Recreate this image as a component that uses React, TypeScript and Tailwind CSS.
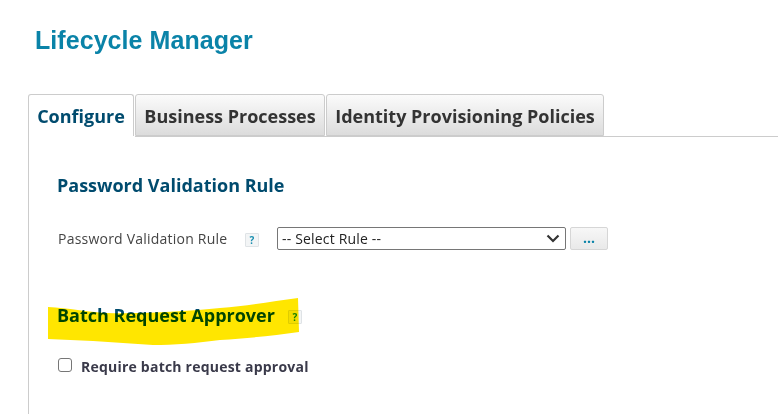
import React from "react";

function Help({ x = "" }: { x?: string }) {
  return (
    <span className={`flex h-[14px] w-[14px] items-center justify-center rounded-[1px] border border-[#dfe3e6] bg-[#f3f5f6] text-[10px] font-bold leading-none text-[#1a8fb0] ${x}`}>
      ?
    </span>
  );
}

function Tab({ label, active, w }: { label: string; active?: boolean; w: string }) {
  return (
    <div
      className={`${w} flex items-center justify-center rounded-t-[3px] border border-[#cccccc] text-[18px] font-bold ${
        active
          ? "h-[43px] border-b-0 bg-white text-[#004b6e]"
          : "h-[42px] bg-gradient-to-b from-[#fbfbfb] to-[#dcdcdc] pt-[2px] text-[#333333]"
      }`}
    >
      {label}
    </div>
  );
}

export default function App() {
  return (
    <div className="h-[414px] w-[778px] overflow-hidden bg-white font-['Open_Sans','Noto_Sans',sans-serif]">
      <h1 className="pl-[35px] pt-[25px] font-['Liberation_Sans',Arial,sans-serif] text-[25px] font-bold leading-[30px] tracking-[0.06px] text-[#0a83a8]">
        Lifecycle Manager
      </h1>
      <div className="mt-[39px] flex items-start gap-px pl-[28px]">
        <Tab label="Configure" active w="w-[106px]" />
        <Tab label="Business Processes" w="w-[190px]" />
        <Tab label="Identity Provisioning Policies" w="w-[278px]" />
      </div>
      <div className="-mt-[1px] ml-[28px] h-[278px] border-l border-t border-[#cccccc]">
        <div className="relative z-10 -mt-px ml-px h-px w-[105px] bg-white" />
        <h2 className="ml-[28px] mt-[36px] text-[18px] font-bold leading-[24px] text-[#004b6e]">
          Password Validation Rule
        </h2>
        <div className="ml-[29px] mt-[30px] flex items-center">
          <span className="w-[187px] text-[14px] leading-[20px] tracking-[0.22px] text-[#444444]">
            Password Validation Rule
          </span>
          <Help x="mt-[2px]" />
          <div className="ml-[18px] flex h-[23px] w-[289px] items-center justify-between rounded-[2px] border border-[#767676] bg-white pl-[4px] pr-[5px] text-[14px] tracking-[0.18px] text-[#222222]">
            <span>-- Select Rule --</span>
            <svg width="14" height="9" viewBox="0 0 14 9" fill="none" stroke="#333" strokeWidth="2.2">
              <path d="M1.5 1.5 7 7 12.5 1.5" />
            </svg>
          </div>
          <div className="ml-[4px] flex h-[23px] w-[38px] items-center justify-center rounded-[2px] border border-[#d6d6d6] bg-gradient-to-b from-[#f7f7f7] to-[#e9e9e9] pb-[3px] text-[14px] font-bold text-[#0a83a8]">
            ...
          </div>
        </div>
        <div className="relative ml-[28px] mt-[53px] flex h-[24px] w-fit items-center">
          <h2 className="text-[18px] font-bold leading-[24px] text-[#004b6e]">Batch Request Approver</h2>
          <Help x="ml-[13px] mt-[3px]" />
          <svg
            className="absolute -left-[9px] -top-[6px] mix-blend-multiply"
            width="252"
            height="50"
            viewBox="0 0 252 50"
            aria-hidden="true"
          >
            <path
              d="M0 10 C20 11 40 15 58 16 C100 17 140 14 172 11 C200 9 225 4 250 1 L251 35 C225 39 200 41 172 43 C150 46 125 48 105 48 C85 47 65 45 45 44 C30 43 15 43 0 42 Z"
              fill="#ffe600"
            />
          </svg>
        </div>
        <label className="ml-[29px] mt-[30px] flex items-center">
          <span className="h-[14px] w-[14px] -translate-y-[2px] rounded-[3px] border border-[#767676] bg-white" />
          <span className="ml-[9px] text-[14px] font-bold leading-[20px] tracking-[0.22px] text-[#3a3a4a]">
            Require batch request approval
          </span>
        </label>
      </div>
    </div>
  );
}
